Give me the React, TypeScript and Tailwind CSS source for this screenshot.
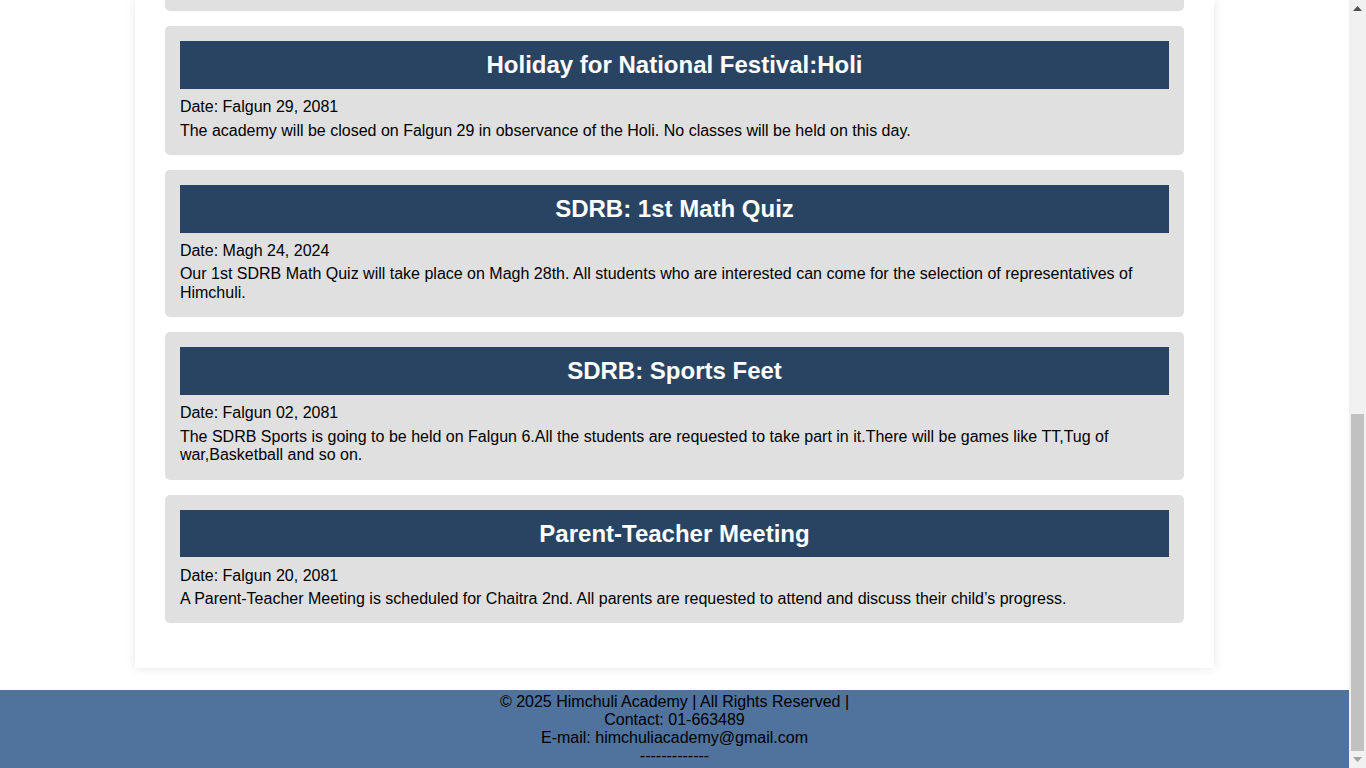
import React from 'react';

interface Notice {
  title: string;
  date: string;
  text: string;
}

const notices: Notice[] = [
  {
    title: 'Holiday for National Festival:Holi',
    date: 'Date: Falgun 29, 2081',
    text: 'The academy will be closed on Falgun 29 in observance of the Holi. No classes will be held on this day.',
  },
  {
    title: 'SDRB: 1st Math Quiz',
    date: 'Date: Magh 24, 2024',
    text: 'Our 1st SDRB Math Quiz will take place on Magh 28th. All students who are interested can come for the selection of representatives of Himchuli.',
  },
  {
    title: 'SDRB: Sports Feet',
    date: 'Date: Falgun 02, 2081',
    text: 'The SDRB Sports is going to be held on Falgun 6.All the students are requested to take part in it.There will be games like TT,Tug of war,Basketball and so on.',
  },
  {
    title: 'Parent-Teacher Meeting',
    date: 'Date: Falgun 20, 2081',
    text: 'A Parent-Teacher Meeting is scheduled for Chaitra 2nd. All parents are requested to attend and discuss their child\u2019s progress.',
  },
];

const NoticeCard: React.FC<Notice> = ({ title, date, text }) => {
  return (
    <div className="bg-[#e0e0e0] rounded-[5px] p-[15px]">
      <h2 className="bg-[#294462] text-white text-[24px] font-bold text-center p-[10px] leading-[27.6px] mb-[9.5px]">
        {title}
      </h2>
      <p className="text-[16px] leading-[18.4px] mb-[5px]">{date}</p>
      <p className="text-[16px] leading-[18.4px]">{text}</p>
    </div>
  );
};

// page is shown scrolled to the bottom, so the browser's scrollbar is drawn too
const Scrollbar: React.FC = () => {
  return (
    <aside className="w-[17px] shrink-0 h-screen bg-[#f1f1f1] flex flex-col items-center">
      <div className="h-[17px] w-full flex items-center justify-center">
        <svg width="9" height="5" viewBox="0 0 9 5">
          <path d="M4.5 0 L9 5 L0 5 Z" fill="#505050" />
        </svg>
      </div>
      <div className="flex-1 w-full flex flex-col justify-end px-[2px]">
        <div className="h-[337px] bg-[#c1c1c1]" />
      </div>
      <div className="h-[17px] w-full flex items-center justify-center">
        <svg width="9" height="5" viewBox="0 0 9 5">
          <path d="M0 0 L9 0 L4.5 5 Z" fill="#a3a3a3" />
        </svg>
      </div>
    </aside>
  );
};

export default function App() {
  return (
    <div className="flex h-screen overflow-hidden bg-white text-black font-['Liberation_Sans',Arial,sans-serif]">
      <div className="w-[1349px] shrink-0 flex flex-col">
        <main className="w-[80%] mx-auto mb-[22px] bg-white shadow-[0_0_10px_rgba(0,0,0,0.1)] px-[30px] pb-[45px]">
          <div className="flex flex-col gap-[15px]">
            <div className="h-[11px] bg-[#e0e0e0] rounded-b-[5px]" />
            {notices.map((n) => (
              <NoticeCard key={n.title} {...n} />
            ))}
          </div>
        </main>

        <footer className="flex-1 bg-[#4f739c] text-center text-[16px] leading-[18px] pt-[3px]">
          <p>© 2025 Himchuli Academy | All Rights Reserved |</p>
          <p>Contact: 01-663489</p>
          <p>E-mail: himchuliacademy@gmail.com</p>
          <p>-------------</p>
        </footer>
      </div>
      <Scrollbar />
    </div>
  );
}
